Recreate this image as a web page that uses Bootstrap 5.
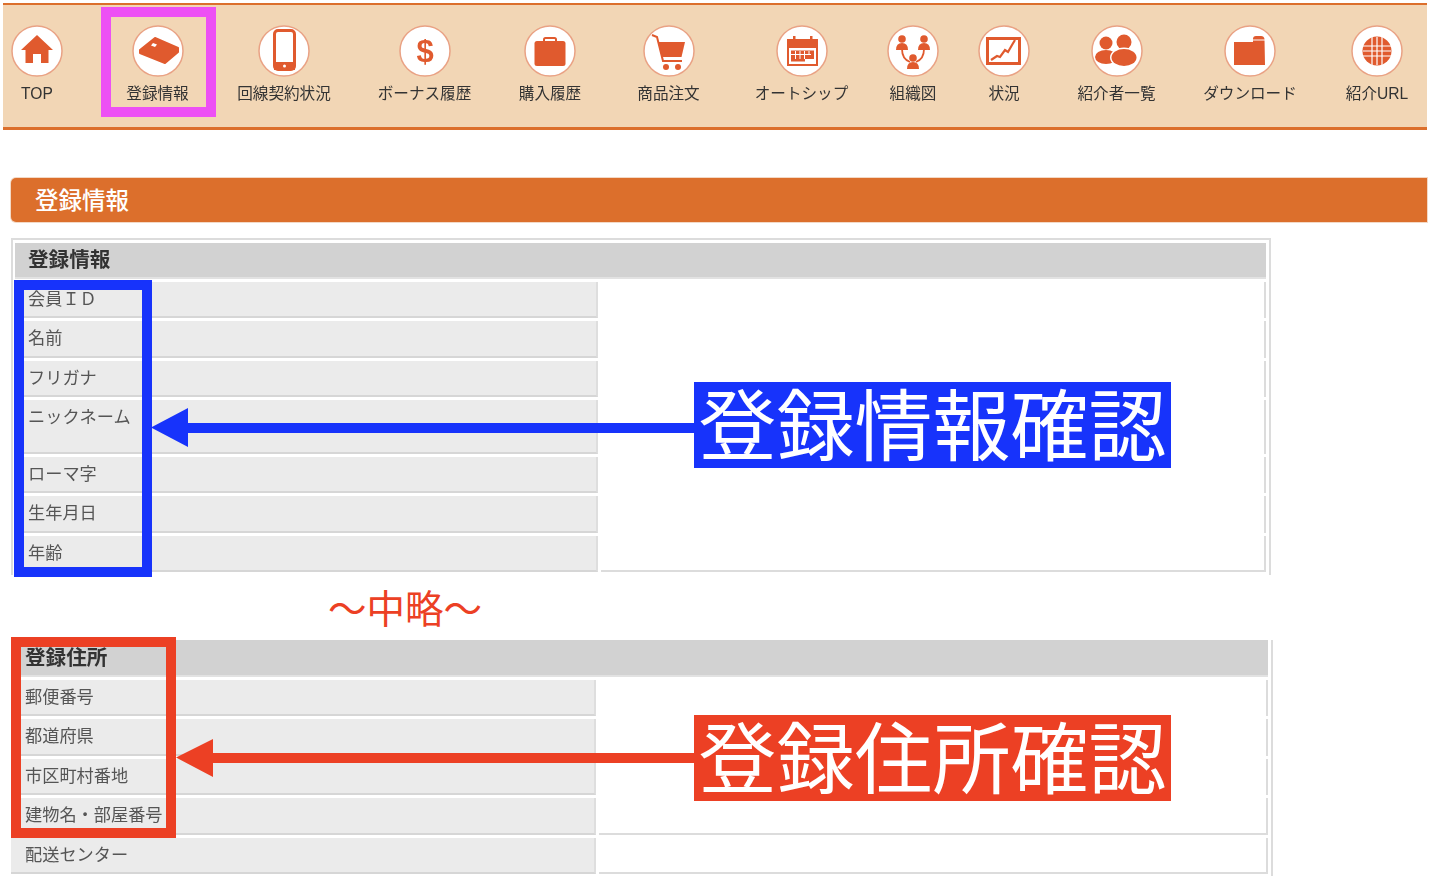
<!DOCTYPE html>
<html lang="ja">
<head>
<meta charset="utf-8">
<title>登録情報</title>
<link href="https://cdn.jsdelivr.net/npm/bootstrap@5.3.0/dist/css/bootstrap.min.css" rel="stylesheet">
<style>
html,body{height:886px;overflow:hidden;background:#fff}
body{position:relative;font-family:"Liberation Sans","Noto Sans CJK JP",sans-serif;padding-top:3px;color:#555}
.topmenu{margin-left:3px;width:1424px;height:127px;background:#f2d6b5;border-top:2px solid #dc6f2c;border-bottom:3px solid #dc6f2c;padding:20px 0 0 8px;flex-wrap:nowrap}
.topmenu .menu-link{color:#333;text-decoration:none;font-size:15.6px;line-height:20px;white-space:nowrap;padding:0;filter:blur(.35px)}
.topmenu .nav-item{flex:none}
.menu-ico{width:52px;height:52px;display:block;margin-bottom:7px}
.menu-ico .disc{fill:#fff;stroke:#e9a285;stroke-width:1.5}
.menu-ico .ink{fill:#e05a2e}
.menu-ico .line{fill:none;stroke:#e05a2e}
.menu-ico .cut{fill:#fff}
.menu-ico .cutl{fill:none;stroke:#fff}
.w52{width:52px}.w63{width:63px}.w94{width:94px}.w93{width:93px}.w62{width:62px}.w79{width:79px}.w64{width:64px}
.m63{margin-left:63px}.m48a{margin-left:48px}.m47{margin-left:47px}.m56{margin-left:56px}.m55{margin-left:55px}.m39{margin-left:39px}
.page-head{margin:48px 5px 0 11px;height:44px;background:#dc6f2c;color:#fff;font-size:23.5px;line-height:46px;padding-left:24px;border-radius:5px 0 0 5px;box-shadow:0 0 0 1px #f3d9c6;font-weight:500}
.frame-a{margin:16px 0 0 11px;width:1260px;border:solid #dcdcdc;border-width:2px 2px 0}
.frame-b{margin-left:8px;width:1265px;border-right:2px solid #dcdcdc;height:236px;overflow:hidden}
.info-tbl{border-collapse:separate;border-spacing:3px;table-layout:fixed;font-size:17.2px;color:#555}
.frame-a .info-tbl{margin-left:-1px;width:1257px}
.frame-b .info-tbl{width:1263px;margin-top:-3px}
.info-tbl th{background:#d2d2d2;color:#333;font-size:20.6px;font-weight:700;border-bottom:2px solid #e2e2e2;padding:2px 0 0 13px;height:35.5px}
.info-tbl .lbl{background:#ebebeb;border-right:2px solid #dedede;border-bottom:2px solid #d6d6d6;padding:0 0 0 13px;height:36.5px;line-height:20px;font-weight:400}
.info-tbl .val{border-right:2px solid #dcdcdc;padding:0}
.info-tbl .val.edge{border-bottom:2px solid #dcdcdc}
.info-tbl .tall{height:53.5px;vertical-align:top;padding-top:7px}
.frame-a .wl{width:583px}
.frame-b .wl{width:585px}
.frame-b th{height:36.5px;padding-left:14px}
.frame-b .lbl{padding-left:14px}
.frame-a,.frame-b{filter:blur(.3px)}
.skip-note{height:65px;padding-left:328px;font-size:38.5px;line-height:70px;color:#ec4024;white-space:nowrap}
.mark-box{position:absolute;border:10px solid;background:transparent;pointer-events:none}
.mark-pink{left:101px;top:7px;width:115px;height:110px;border-color:#ed50f4}
.mark-blue{left:14px;top:280px;width:138px;height:297px;border-color:#1733fb}
.mark-red{left:11px;top:637px;width:165px;height:201px;border-color:#ec4024}
.call-label{position:absolute;left:694px;width:477px;height:86px;color:#fff;font-size:78px;line-height:78px;text-align:center;white-space:nowrap;font-family:"Noto Sans CJK JP",sans-serif}
.call-blue{top:382px;background:#1733fb}
.call-red{top:715px;background:#ec4024}
.call-arrow{position:absolute;left:150px;width:545px;height:40px}
.arrow-blue{top:408px}
.arrow-red{top:738px;left:176px;width:519px}
</style>
</head>
<body>
<ul class="nav topmenu">
<li class="nav-item w52"><a class="menu-link d-flex flex-column align-items-center" href="#">
<svg class="menu-ico" viewBox="0 0 52 52"><circle class="disc" cx="26" cy="26" r="25"/><polygon class="ink" points="26,10 42,25 37.5,25 37.5,38 30,38 30,29 22,29 22,38 14.5,38 14.5,25 10,25"/></svg>TOP</a></li>
<li class="nav-item w63 m63"><a class="menu-link d-flex flex-column align-items-center" href="#">
<svg class="menu-ico" viewBox="0 0 52 52"><circle class="disc" cx="26" cy="26" r="25"/><polygon class="ink" stroke="#e05a2e" stroke-width="2" stroke-linejoin="round" points="23,13 46,23 46,27 33,38 8,28 8,25"/><polygon class="cut" points="21,18 25,19.5 23,22 19,20.5"/></svg>登録情報</a></li>
<li class="nav-item w94 m48a"><a class="menu-link d-flex flex-column align-items-center" href="#">
<svg class="menu-ico" viewBox="0 0 52 52"><circle class="disc" cx="26" cy="26" r="25"/><rect class="line" stroke-width="3" x="16.5" y="5.5" width="20" height="39" rx="3.5"/><rect class="ink" x="16" y="37" width="21" height="8"/><circle class="cut" cx="26.5" cy="41" r="1.5"/></svg>回線契約状況</a></li>
<li class="nav-item w93 m47"><a class="menu-link d-flex flex-column align-items-center" href="#">
<svg class="menu-ico" viewBox="0 0 52 52"><circle class="disc" cx="26" cy="26" r="25"/><text class="ink" x="26" y="37" text-anchor="middle" font-size="31" font-weight="700" font-family="Liberation Sans">$</text></svg>ボーナス履歴</a></li>
<li class="nav-item w62 m48a"><a class="menu-link d-flex flex-column align-items-center" href="#">
<svg class="menu-ico" viewBox="0 0 52 52"><circle class="disc" cx="26" cy="26" r="25"/><rect class="ink" x="10.5" y="16" width="31" height="25" rx="2.5"/><path class="line" stroke-width="2" d="M20 17v-2.5q0-1.5 1.500-1.500h9q1.500 0 1.500 1.500V17"/></svg>購入履歴</a></li>
<li class="nav-item w63 m56"><a class="menu-link d-flex flex-column align-items-center" href="#">
<svg class="menu-ico" viewBox="0 0 52 52"><circle class="disc" cx="26" cy="26" r="25"/><polygon class="ink" points="15,17 42,17 38.500,32 19,32"/><path class="line" stroke-width="2" d="M9 10l5 2 6 24h19"/><circle class="ink" cx="23" cy="42" r="3"/><circle class="ink" cx="35" cy="42" r="3"/></svg>商品注文</a></li>
<li class="nav-item w93 m55"><a class="menu-link d-flex flex-column align-items-center" href="#">
<svg class="menu-ico" viewBox="0 0 52 52"><circle class="disc" cx="26" cy="26" r="25"/><rect class="ink" x="11" y="14" width="31" height="9"/><rect class="ink" x="17" y="11" width="2.500" height="5"/><rect class="ink" x="34" y="11" width="2.500" height="5"/><rect class="line" stroke-width="2" x="12" y="15" width="29" height="25"/><rect class="ink" x="15" y="25.500" width="23" height="8.500"/><path class="cutl" stroke-width="1" d="M15 29.500h20M19.500 26v8M24 26v8M28.500 26v8M33 26v4"/><rect class="ink" x="15" y="34" width="14" height="2.500"/></svg>オートシップ</a></li>
<li class="nav-item w52 m39"><a class="menu-link d-flex flex-column align-items-center" href="#">
<svg class="menu-ico" viewBox="0 0 52 52"><circle class="disc" cx="26" cy="26" r="25"/><path class="line" stroke-width="1.800" d="M15 24q0 10 8 13M37 24q0 10-8 13"/><g class="ink"><circle cx="15" cy="14" r="3.800"/><path d="M9 25q0-7 6-7t6 7z"/><circle cx="37" cy="14" r="3.800"/><path d="M31 25q0-7 6-7t6 7z"/><circle cx="26" cy="33" r="3.800"/><path d="M20 44q0-7 6-7t6 7z"/></g></svg>組織図</a></li>
<li class="nav-item w52 m39"><a class="menu-link d-flex flex-column align-items-center" href="#">
<svg class="menu-ico" viewBox="0 0 52 52"><circle class="disc" cx="26" cy="26" r="25"/><rect class="line" stroke-width="3" x="9.500" y="13.500" width="32" height="25"/><path class="line" stroke-width="2.200" d="M13 35l6-4 3 1 5-7 3 2 4-7 3-5"/></svg>状況</a></li>
<li class="nav-item w79 m47"><a class="menu-link d-flex flex-column align-items-center" href="#">
<svg class="menu-ico" viewBox="0 0 52 52"><circle class="disc" cx="26" cy="26" r="25"/><g class="ink"><circle cx="15" cy="18" r="6.500"/><ellipse cx="15" cy="32" rx="11" ry="7"/><circle cx="33" cy="17" r="7.500"/></g><ellipse class="cut" cx="33" cy="32.500" rx="14" ry="10"/><ellipse class="ink" cx="33" cy="32.500" rx="12.500" ry="8.500"/></svg>紹介者一覧</a></li>
<li class="nav-item w94 m47"><a class="menu-link d-flex flex-column align-items-center" href="#">
<svg class="menu-ico" viewBox="0 0 52 52"><circle class="disc" cx="26" cy="26" r="25"/><path class="ink" d="M10 17h19v-3q0-3 3-3h5q3 0 3.500 3l.5 26H10z"/><path class="cutl" stroke-width="1" d="M10 16.500h19M29 15h12"/></svg>ダウンロード</a></li>
<li class="nav-item w64 m48a"><a class="menu-link d-flex flex-column align-items-center" href="#">
<svg class="menu-ico" viewBox="0 0 52 52"><circle class="disc" cx="26" cy="26" r="25"/><circle class="ink" cx="26" cy="26" r="14.500"/><path class="cutl" stroke-width="1.200" d="M12 21h28M12 26h28M12 31h28M21 12v28M26 12v28M31 12v28"/></svg>紹介URL</a></li>
</ul>

<h1 class="page-head">登録情報</h1>

<div class="frame-a">
<table class="info-tbl">
<colgroup><col class="wl"><col></colgroup>
<tr><th colspan="2">登録情報</th></tr>
<tr><td class="lbl">会員ＩＤ</td><td class="val"></td></tr>
<tr><td class="lbl">名前</td><td class="val"></td></tr>
<tr><td class="lbl">フリガナ</td><td class="val"></td></tr>
<tr><td class="lbl tall">ニックネーム</td><td class="val"></td></tr>
<tr><td class="lbl">ローマ字</td><td class="val"></td></tr>
<tr><td class="lbl">生年月日</td><td class="val"></td></tr>
<tr><td class="lbl">年齢</td><td class="val edge"></td></tr>
</table>
</div>

<div class="skip-note">〜中略〜</div>

<div class="frame-b">
<table class="info-tbl">
<colgroup><col class="wl"><col></colgroup>
<tr><th colspan="2">登録住所</th></tr>
<tr><td class="lbl">郵便番号</td><td class="val"></td></tr>
<tr><td class="lbl">都道府県</td><td class="val"></td></tr>
<tr><td class="lbl">市区町村番地</td><td class="val"></td></tr>
<tr><td class="lbl">建物名・部屋番号</td><td class="val edge"></td></tr>
<tr><td class="lbl">配送センター</td><td class="val edge"></td></tr>
</table>
</div>

<div class="mark-box mark-pink"></div>
<div class="mark-box mark-blue"></div>
<div class="mark-box mark-red"></div>
<svg class="call-arrow arrow-blue" viewBox="0 0 545 40"><polygon fill="#1733fb" points="1,19.500 38,0 38,15 545,15 545,25 38,25 38,39"/></svg>
<svg class="call-arrow arrow-red" viewBox="0 0 519 40"><polygon fill="#ec4024" points="0,19.500 37,1 37,15 519,15 519,25 37,25 37,39"/></svg>
<div class="call-label call-blue">登録情報確認</div>
<div class="call-label call-red">登録住所確認</div>
<script src="https://cdn.jsdelivr.net/npm/bootstrap@5.3.0/dist/js/bootstrap.bundle.min.js"></script>
</body>
</html>
